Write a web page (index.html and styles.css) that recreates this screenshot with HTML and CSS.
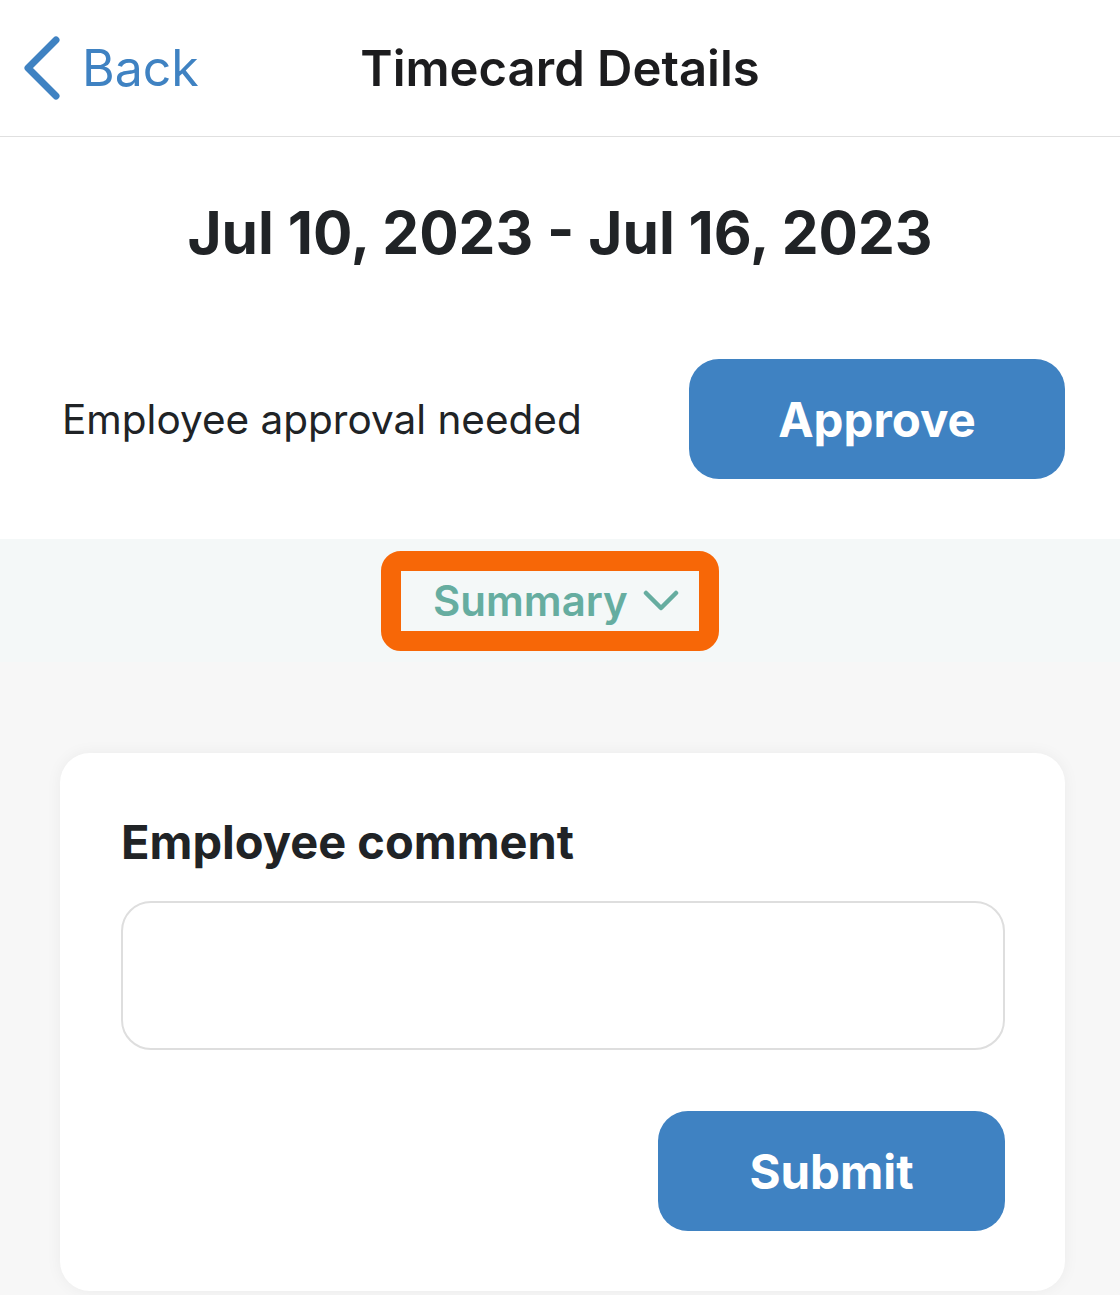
FILE: index.html
```html
<!DOCTYPE html>
<html>
<head>
  <meta name="viewport" content="width=device-width, initial-scale=1.0">
  <title>Timecard Details</title>
  <link rel="stylesheet" href="styles.css">
</head>
<body>
  <div class="header">
    <a class="back" href="#">
      <svg width="40" height="64" viewBox="0 0 40 64"><path d="M34 4 L6 32 L34 60" fill="none" stroke="#3f82c2" stroke-width="7" stroke-linecap="round" stroke-linejoin="round"/></svg>
      <span>Back</span>
    </a>
    <div class="title">Timecard Details</div>
  </div>

  <h1 class="range">Jul 10, 2023 - Jul 16, 2023</h1>

  <div class="approval">
    <span class="approval-text">Employee approval needed</span>
    <button class="button approve">Approve</button>
  </div>

  <div class="summary-bar">
    <div class="highlight">
      <div class="summary">
        <span>Summary</span>
        <svg width="36" height="22" viewBox="0 0 36 22"><path d="M3 3 L18 18 L33 3" fill="none" stroke="#66ada0" stroke-width="4.5" stroke-linecap="round" stroke-linejoin="round"/></svg>
      </div>
    </div>
  </div>

  <div class="content">
    <div class="card">
      <h2 class="card-title">Employee comment</h2>
      <textarea class="comment"></textarea>
      <div class="actions">
        <button class="button submit">Submit</button>
      </div>
    </div>
  </div>
</body>
</html>
```

FILE: styles.css
```css
body {
  margin: 0;
  background: #f7f7f7;
  color: #202326;
  font-family: Inter, 'Noto Sans', sans-serif;
}
.header {
  height: 136px;
  border-bottom: 1px solid #e0e0e0;
  background: white;
  display: flex;
  align-items: center;
  position: relative;
}
.back {
  display: flex;
  align-items: center;
  gap: 20px;
  padding-left: 22px;
  color: #3f82c2;
  text-decoration: none;
  font-size: 50px;
}
.title {
  position: absolute;
  left: 0;
  right: 0;
  text-align: center;
  font-size: 49px;
  font-weight: 600;
  color: #1c1c1e;
  pointer-events: none;
}
.range {
  margin: 0;
  background: white;
  padding: 60px 0 0;
  height: 160px;
  box-sizing: border-box;
  text-align: center;
  font-size: 58.5px;
  font-weight: 700;
}
.approval {
  background: white;
  display: flex;
  justify-content: space-between;
  align-items: center;
  padding: 62px 55px 60px 62px;
}
.approval-text {
  font-size: 40.5px;
}
.button {
  background-color: #3f82c2;
  color: white;
  border: none;
  border-radius: 30px;
  font-family: inherit;
  font-weight: 700;
  font-size: 47.5px;
  height: 120px;
  cursor: pointer;
}
.approve {
  width: 376px;
}
.summary-bar {
  background: #f4f8f8;
  height: 123px;
  display: flex;
  justify-content: center;
  align-items: center;
}
.highlight {
  border: 20px solid #f76707;
  border-radius: 20px;
  margin-right: 20px;
}
.summary {
  background: #f4f8f8;
  border-radius: 3px;
  width: 298px;
  height: 60px;
  box-sizing: border-box;
  padding-left: 32px;
  display: flex;
  align-items: center;
  gap: 15px;
  color: #66ada0;
  font-size: 42px;
  font-weight: 600;
}
.content {
  padding: 91px 55px 5px 60px;
}
.card {
  background: white;
  border-radius: 30px;
  box-shadow: 0 0 16px rgba(0, 0, 0, 0.05);
  padding: 60px 60px 60px 61px;
}
.card-title {
  margin: 0 0 31px;
  font-size: 47px;
  font-weight: 700;
}
.comment {
  display: block;
  width: 100%;
  height: 149px;
  box-sizing: border-box;
  border: 2px solid #dedede;
  border-radius: 30px;
  resize: none;
}
.actions {
  display: flex;
  justify-content: flex-end;
  margin-top: 61px;
}
.submit {
  width: 347px;
}
```
